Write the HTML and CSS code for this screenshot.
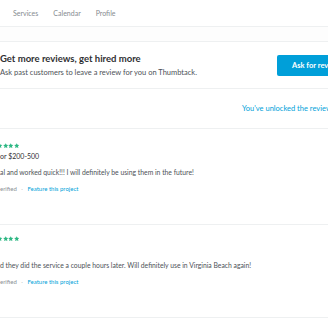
FILE: index.html
```html
<!DOCTYPE html>
<html lang="en">
<head>
    <meta charset="UTF-8">
    <title>Reviews</title>
    <link rel="stylesheet" href="styles.css">
</head>
<body>
    <div class="page">
        <nav class="nav">
            <a href="#">Services</a>
            <a href="#">Calendar</a>
            <a href="#">Profile</a>
        </nav>
        <div class="band"></div>

        <div class="ask-card">
            <div class="ask-text">
                <h2>Get more reviews, get hired more</h2>
                <p>Ask past customers to leave a review for you on Thumbtack.</p>
            </div>
            <button class="ask-btn">Ask for reviews</button>
        </div>

        <div class="unlocked">
            <a href="#">You've unlocked the reviews feature</a>
        </div>

        <div class="review first">
            <div class="stars">
                <svg viewBox="0 0 10 10"><path d="M5 0.3l1.4 3.1 3.3 0.3-2.5 2.2 0.8 3.3L5 7.5 2 9.2l0.8-3.3L0.3 3.7l3.3-0.3z"/></svg>
                <svg viewBox="0 0 10 10"><path d="M5 0.3l1.4 3.1 3.3 0.3-2.5 2.2 0.8 3.3L5 7.5 2 9.2l0.8-3.3L0.3 3.7l3.3-0.3z"/></svg>
                <svg viewBox="0 0 10 10"><path d="M5 0.3l1.4 3.1 3.3 0.3-2.5 2.2 0.8 3.3L5 7.5 2 9.2l0.8-3.3L0.3 3.7l3.3-0.3z"/></svg>
                <svg viewBox="0 0 10 10"><path d="M5 0.3l1.4 3.1 3.3 0.3-2.5 2.2 0.8 3.3L5 7.5 2 9.2l0.8-3.3L0.3 3.7l3.3-0.3z"/></svg>
            </div>
            <p class="price">or $200-500</p>
            <p class="body">al and worked quick!!! I will definitely be using them in the future!</p>
            <p class="meta">erified <span class="dot">·</span> <a href="#">Feature this project</a></p>
        </div>

        <div class="review">
            <div class="stars">
                <svg viewBox="0 0 10 10"><path d="M5 0.3l1.4 3.1 3.3 0.3-2.5 2.2 0.8 3.3L5 7.5 2 9.2l0.8-3.3L0.3 3.7l3.3-0.3z"/></svg>
                <svg viewBox="0 0 10 10"><path d="M5 0.3l1.4 3.1 3.3 0.3-2.5 2.2 0.8 3.3L5 7.5 2 9.2l0.8-3.3L0.3 3.7l3.3-0.3z"/></svg>
                <svg viewBox="0 0 10 10"><path d="M5 0.3l1.4 3.1 3.3 0.3-2.5 2.2 0.8 3.3L5 7.5 2 9.2l0.8-3.3L0.3 3.7l3.3-0.3z"/></svg>
                <svg viewBox="0 0 10 10"><path d="M5 0.3l1.4 3.1 3.3 0.3-2.5 2.2 0.8 3.3L5 7.5 2 9.2l0.8-3.3L0.3 3.7l3.3-0.3z"/></svg>
            </div>
            <p class="price">&nbsp;</p>
            <p class="body">d they did the service a couple hours later. Will definitely use in Virginia Beach again!</p>
            <p class="meta">erified <span class="dot">·</span> <a href="#">Feature this project</a></p>
        </div>
    </div>
</body>
</html>
```

FILE: styles.css
```css
body {
    font-family: Lato, "Liberation Sans", sans-serif;
    background: white;
    margin: 0;
    overflow: hidden;
    color: #2f3033;
}
.page {
    width: 420px;
}
a {
    text-decoration: none;
}
.nav {
    display: flex;
    align-items: center;
    gap: 15px;
    height: 27px;
    padding-left: 13px;
    border-bottom: 1px solid #eef0f1;
    box-sizing: border-box;
}
.nav a {
    font-size: 7px;
    color: #868b90;
}
.band {
    height: 14px;
    background: #fdfdfd;
    border-bottom: 1px solid #eef0f1;
}
.ask-card {
    display: flex;
    align-items: center;
    height: 46px;
    border-bottom: 1px solid #eef0f1;
}
.ask-text {
    flex: 1;
}
.ask-text h2 {
    margin: 0 0 3px;
    font-size: 9.5px;
    font-weight: 700;
    line-height: 12px;
}
.ask-text p {
    margin: 0;
    font-size: 7.5px;
    line-height: 10px;
    color: #4d5257;
}
.ask-btn {
    width: 143px;
    height: 21px;
    background: #009fd9;
    color: white;
    border: none;
    border-radius: 2px;
    font-family: inherit;
    font-size: 7.5px;
    font-weight: 700;
    text-align: left;
    padding-left: 15px;
    margin-top: 1px;
}
.unlocked {
    height: 39px;
    display: flex;
    align-items: center;
    padding-left: 242px;
    border-bottom: 1px solid #eef0f1;
}
.unlocked a {
    font-size: 7.5px;
    color: #009fd9;
    white-space: nowrap;
}
.review {
    padding-top: 10px;
    height: 82px;
    border-bottom: 1px solid #eef0f1;
}
.review.first {
    padding-top: 13px;
    height: 82px;
}
.stars {
    display: flex;
    margin-left: -3px;
    height: 7px;
    align-items: center;
}
.stars svg {
    width: 5.5px;
    height: 5.5px;
    fill: #2db783;
}
.review p {
    margin: 0;
    white-space: nowrap;
}
.review .price {
    font-size: 7px;
    line-height: 10px;
    margin-top: 2px;
    color: #2f3033;
}
.review .body {
    font-size: 6.8px;
    line-height: 10px;
    margin-top: 6px;
    color: #4d5257;
}
.review .meta {
    font-size: 6px;
    line-height: 10px;
    margin-top: 7px;
    color: #8a9095;
}
.meta .dot {
    color: #c0c4c7;
    margin: 0 3px;
}
.meta a {
    color: #009fd9;
}
```
